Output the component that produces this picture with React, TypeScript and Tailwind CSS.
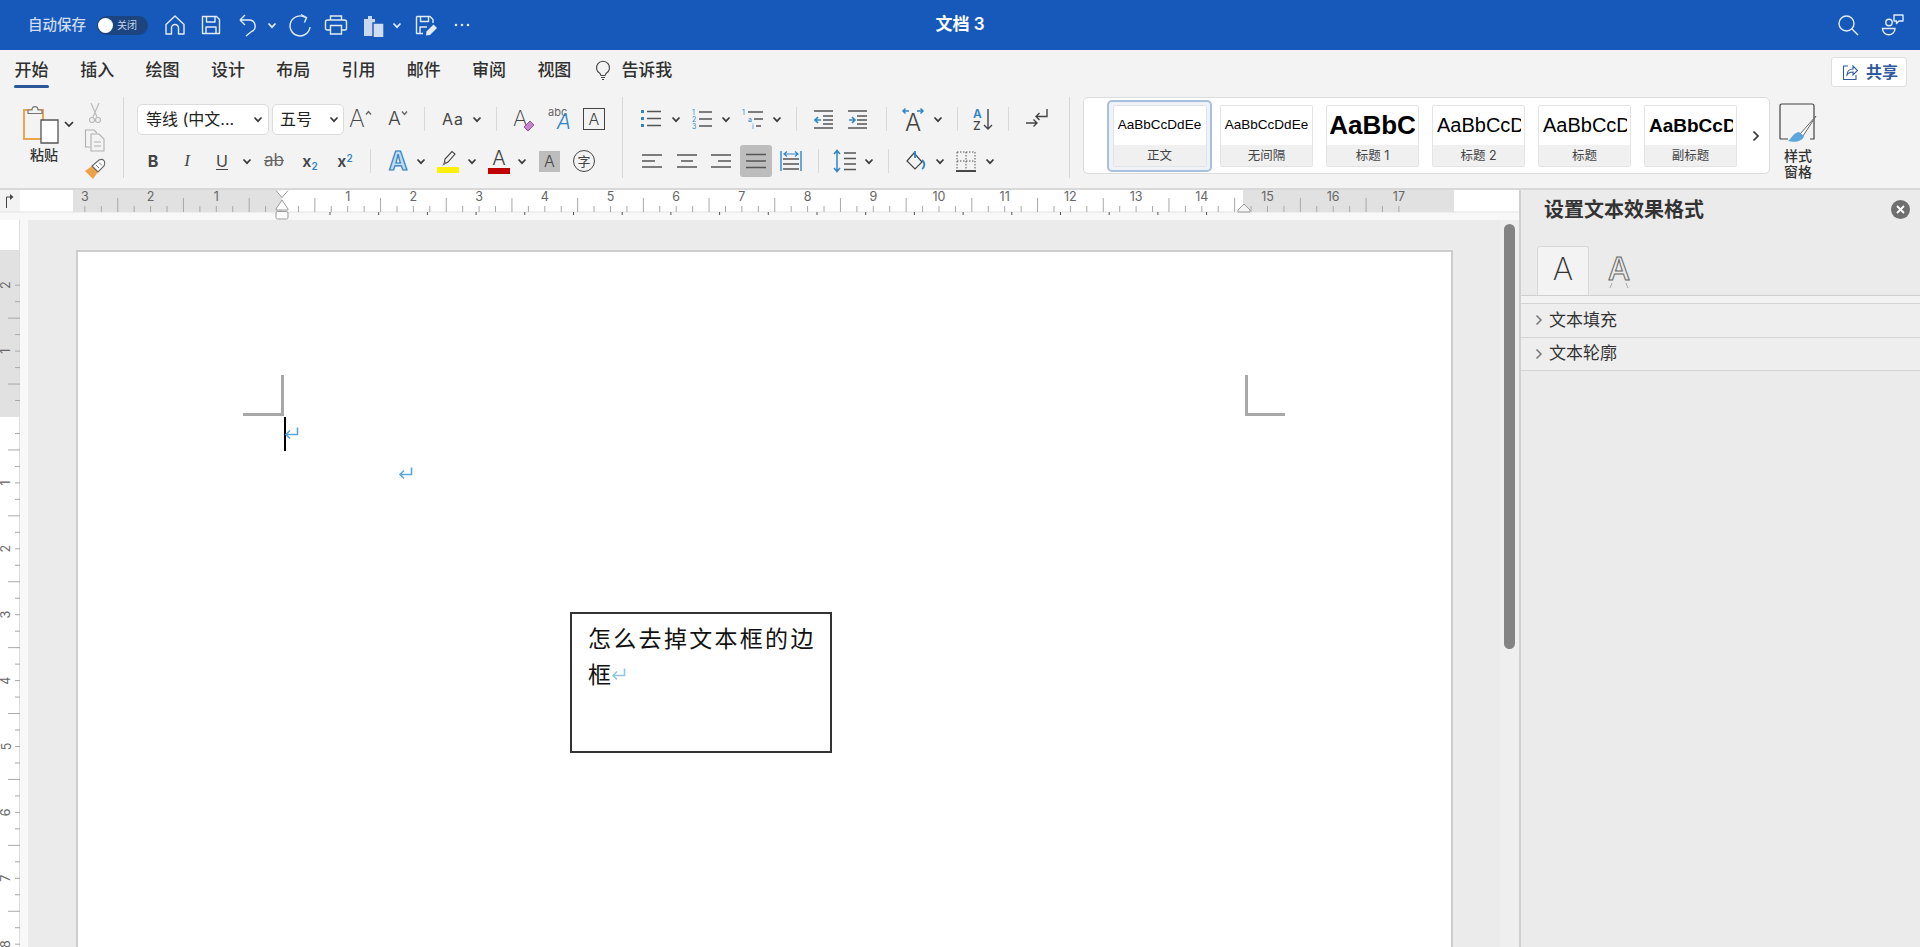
import type { ReactNode } from "react";
import clsx from "clsx";

const tabs = ["开始", "插入", "绘图", "设计", "布局", "引用", "邮件", "审阅", "视图"];
const UNIT = 65.7;
const ZERO = 282;
const V_UNIT = 65.9;
const V_ZERO = 417 - 220;

function Ic({
  w,
  h = w,
  className,
  children,
}: {
  w: number;
  h?: number;
  className?: string;
  children: ReactNode;
}) {
  return (
    <svg
      width={w}
      height={h}
      viewBox={`0 0 ${w} ${h}`}
      fill="none"
      stroke="currentColor"
      strokeWidth="1.4"
      className={clsx("shrink-0", className)}
    >
      {children}
    </svg>
  );
}

function Chev({ className }: { className?: string }) {
  return (
    <Ic w={10} h={7} className={clsx("text-[#3a3a3a]", className)}>
      <path d="M1.5 1.5 L5 5.2 L8.5 1.5" strokeWidth="1.7" />
    </Ic>
  );
}

function Sep({ className }: { className?: string }) {
  return <div className={clsx("w-px h-[24px] bg-[#d8d8d8] shrink-0", className)} />;
}

function GroupSep() {
  return <div className="w-px h-[81px] mt-[2px] bg-[#d8d8d8] shrink-0" />;
}

function Lines({ className }: { className?: string }) {
  return (
    <Ic w={20} h={20} className={clsx("text-[#555]", className)}>
      <path d="M0 3.5 H20 M0 10 H20 M0 16.5 H20" />
    </Ic>
  );
}

function TitleBar() {
  return (
    <div className="h-[50px] bg-[#1659bb] grid grid-cols-[1fr_auto_1fr] items-center text-[#e3ebf7] shrink-0">
      <div className="flex items-center pl-[28px]">
        <span className="text-[14.5px] text-[#cfdcf1] font-medium">自动保存</span>
        <div className="ml-[11px] w-[51px] h-[19px] rounded-full bg-[#1c447f] flex items-center">
          <div className="w-[15px] h-[15px] rounded-full bg-white ml-[1px]" />
          <span className="ml-[4px] text-[10px] leading-none text-[#c6d4ea]">关闭</span>
        </div>
        <Ic w={22} h={24} className="ml-[16px]">
          <path d="M2 11.5 L11 3 L20 11.5 V21 H14.5 V15 A3.5 3.5 0 0 0 7.5 15 V21 H2 Z" strokeLinejoin="round" />
        </Ic>
        <Ic w={22} h={24} className="ml-[14px]">
          <path d="M2.5 3.5 H16.5 L19.5 6.5 V20.5 H2.5 Z M6.5 3.5 V9 H15 V3.5 M6 20.5 V14 H16 V20.5" strokeLinejoin="round" />
        </Ic>
        <Ic w={24} className="ml-[14px]">
          <path d="M4 7 L9 2 M4 7 L9 12 M4 7 H13 A6 6 0 0 1 15.5 18.5 L10 23" />
        </Ic>
        <Chev className="ml-[7px] text-[#e3ebf7]" />
        <Ic w={24} className="ml-[11px]">
          <path d="M17.5 4.5 A10 10 0 1 0 22 14" />
          <path d="M13 1.5 L18.5 4.5 L16.5 9.5" />
        </Ic>
        <Ic w={24} className="ml-[12px]">
          <path d="M6.5 7 V3 H17.5 V7 M6.5 17 H3 A1.5 1.5 0 0 1 1.5 15.5 V9 A2 2 0 0 1 3.5 7 H20.5 A2 2 0 0 1 22.5 9 V15.5 A1.5 1.5 0 0 1 21 17 H17.5 M6.5 12.5 H17.5 V21 H6.5 Z" />
        </Ic>
        <Ic w={24} className="ml-[14px]">
          <path d="M2 6 H6 V3 H10 V6 H13 V23 H2 Z" fill="#c9d8ee" stroke="none" />
          <path d="M11 10 H22 V25 H11 Z" fill="#cfdcf1" stroke="#1659bb" />
        </Ic>
        <Chev className="ml-[6px] text-[#e3ebf7]" />
        <Ic w={24} className="ml-[12px]">
          <path d="M2.5 3.5 H16 L19 6.5 V10 M2.5 3.5 V20.5 H9 M6.5 3.5 V8.5 H14.5 V3.5 M6 20 V14 H13" strokeLinejoin="round" />
          <path d="M12 22.5 L12.5 18.5 L19.5 11.5 L23 15 L16 22 Z" fill="#e3ebf7" stroke="none" />
        </Ic>
        <Ic w={18} h={6} className="ml-[15px]">
          <path d="M3 3 H3.01 M9 3 H9.01 M15 3 H15.01" strokeWidth="2.6" strokeLinecap="round" />
        </Ic>
      </div>
      <div className="text-[17px] font-semibold text-white">文档 3</div>
      <div className="flex items-center justify-end pr-[15px]">
        <Ic w={22}>
          <circle cx="9.5" cy="9.5" r="7.5" />
          <path d="M15 15 L21 21" />
        </Ic>
        <Ic w={24} className="ml-[22px]">
          <circle cx="8" cy="9.5" r="3.2" />
          <path d="M1.5 15.5 H14 A6.2 6.2 0 0 1 1.5 15.5 Z" />
          <path d="M13 2 H22 V8 H18 L15.5 10.5 V8 H13 Z" strokeLinejoin="round" />
        </Ic>
      </div>
    </div>
  );
}

function TabRow() {
  return (
    <div className="h-[45px] flex items-start pl-[14px] shrink-0">
      <div className="flex gap-[31.3px] pt-[8px]">
        {tabs.map((t, i) => (
          <div key={t} className="flex flex-col items-center">
            <span className="text-[17px] leading-[24px] font-medium text-[#303030]">{t}</span>
            {i === 0 && <div className="w-[35px] h-[3px] mt-[3px] rounded-full bg-[#2b579a]" />}
          </div>
        ))}
      </div>
      <Ic w={16} h={22} className="ml-[24px] mt-[9px] text-[#444]">
        <path d="M5 14.5 A6.5 6.5 0 1 1 11 14.5 L10 16.5 H6 Z M6 18.5 H10 M7 20.5 H9" strokeWidth="1.1" />
      </Ic>
      <span className="ml-[10px] pt-[8px] text-[17px] leading-[24px] font-medium text-[#303030]">告诉我</span>
      <div className="ml-auto mr-[13px] mt-[7px] w-[76px] h-[30px] bg-white border border-[#dedede] rounded-[3px] flex items-center pl-[10px]">
        <Ic w={16} h={18} className="text-[#2f5a9e]">
          <path d="M6 3 H1.5 V16.5 H14 V12 M5 12 C5 8 8 6 11 6 V3 L15.5 7.5 L11 12 V9 C9 9 6.5 9.5 5 12 Z" strokeWidth="1.1" />
        </Ic>
        <span className="ml-[8px] text-[16px] font-semibold text-[#2f5a9e]">共享</span>
      </div>
    </div>
  );
}

function PasteGroup() {
  return (
    <div className="w-[123px] flex pl-[21px] pt-[7px] shrink-0">
      <div className="w-[54px] flex flex-col">
        <Ic w={54} h={42}>
          <path d="M3 8 H22 V37 H3 Z" stroke="#e9a64c" strokeWidth="2" />
          <path d="M7 8 H11 C11 3.5 17 3.5 17 8 H21 V11.5 H7 Z" fill="#f3f3f3" stroke="#777" strokeWidth="1.2" />
          <path d="M20 18 H37 V41 H20 Z" fill="white" stroke="#555" strokeWidth="1.3" />
          <path d="M44 20 L48 24 L52 20" stroke="#333" strokeWidth="1.7" />
        </Ic>
        <span className="w-[46px] text-center text-[14px] leading-[20px] mt-[1px] text-[#333] font-medium">粘贴</span>
      </div>
      <div className="ml-[9px] w-[21px] flex flex-col items-center">
        <Ic w={14} h={22} className="text-[#b7b7b7] mt-[1px]">
          <path d="M3 0 L9 14 M11 0 L5 14" strokeWidth="1.1" />
          <circle cx="4" cy="17" r="2.5" strokeWidth="1.1" />
          <circle cx="10" cy="17" r="2.5" strokeWidth="1.1" />
        </Ic>
        <Ic w={22} h={24} className="mt-[3px] text-[#b0b0b0]">
          <path d="M6 19 H1.5 V2 H10 L13 5" strokeWidth="1.1" />
          <path d="M7 6 H15 L20 11 V23 H7 Z M10 14 H17 M10 18 H17" strokeWidth="1.1" />
        </Ic>
        <Ic w={22} className="mt-[6px]">
          <path d="M1 13 L9 21 L14 14 L8 8 Z" fill="#eda24a" stroke="none" />
          <path d="M8 8 L14 14 L20 8 C22 3 19 0 15 2 Z" fill="white" stroke="#666" strokeWidth="1.1" />
          <path d="M12 7 L15 10 M15 4.5 L18 7.5" stroke="#666" strokeWidth="0.9" />
        </Ic>
      </div>
    </div>
  );
}

function FontGroup() {
  return (
    <div className="w-[498px] pt-[8px] shrink-0 text-[#444]">
      <div className="h-[32px] flex items-center">
        <div className="ml-[13px] w-[132px] h-[31px] bg-white border border-[#dcdcdc] rounded-[5px] flex items-center pl-[8px] shrink-0">
          <span className="text-[16px] text-[#222]">等线 (中文...</span>
          <Chev className="ml-auto mr-[5px]" />
        </div>
        <div className="ml-[3px] w-[72px] h-[31px] bg-white border border-[#dcdcdc] rounded-[5px] flex items-center pl-[7px] shrink-0">
          <span className="text-[16px] text-[#222]">五号</span>
          <Chev className="ml-auto mr-[4px]" />
        </div>
        <div className="ml-[5px] w-[24px] flex items-start">
          <span className="text-[24px] leading-[28px] font-extralight">A</span>
          <Ic w={7} h={6} className="mt-[5px] text-[#666]">
            <path d="M1 4.5 L3.5 1.5 L6 4.5" />
          </Ic>
        </div>
        <div className="ml-[15px] w-[20px] flex items-start">
          <span className="text-[19px] leading-[26px] font-light">A</span>
          <Ic w={7} h={6} className="mt-[4px] text-[#666]">
            <path d="M1 1.5 L3.5 4.5 L6 1.5" />
          </Ic>
        </div>
        <Sep className="ml-[16px]" />
        <span className="ml-[17px] w-[22px] text-[16px] leading-none tracking-[1px] whitespace-nowrap">Aa</span>
        <Chev className="ml-[8px]" />
        <Sep className="ml-[14px]" />
        <div className="ml-[16px] w-[21px] flex items-start relative h-[26px]">
          <span className="text-[22px] leading-[24px] font-extralight">A</span>
          <Ic w={12} h={12} className="absolute right-[-1px] bottom-[0px]">
            <path d="M1 7 L7 1 L11 5 L5 11 Z" fill="#c583c8" stroke="#9a4ea0" strokeWidth="1" />
          </Ic>
        </div>
        <div className="ml-[14px] w-[23px] h-[28px] relative">
          <span className="absolute left-0 top-[1px] text-[11px] leading-[12px] text-[#666]">abc</span>
          <span className="absolute right-0 bottom-0 text-[21px] leading-[22px] italic font-light text-[#2e86c9]">A</span>
        </div>
        <div className="ml-[12px] w-[22px] h-[22px] border border-[#444] flex items-center justify-center text-[16px] leading-none font-light">A</div>
      </div>
      <div className="h-[32px] mt-[10px] flex items-center">
        <span className="ml-[21px] w-[16px] text-center text-[16px] font-bold">B</span>
        <span className="ml-[18px] w-[16px] text-center text-[17px] italic [font-family:'Liberation_Serif',serif]">I</span>
        <span className="ml-[19px] w-[16px] text-center text-[16px] underline underline-offset-2">U</span>
        <Chev className="ml-[12px]" />
        <span className="ml-[11px] w-[22px] text-center text-[17px] line-through text-[#666]">ab</span>
        <span className="ml-[15px] w-[20px] text-center text-[16px] font-semibold">
          x<sub className="text-[10px] text-[#2e86c9]">2</sub>
        </span>
        <span className="ml-[15px] w-[20px] text-center text-[16px] font-semibold">
          x<sup className="text-[10px] text-[#2e86c9]">2</sup>
        </span>
        <Sep className="ml-[15px]" />
        <span className="ml-[16px] w-[22px] text-center text-[25px] leading-none font-bold text-[#bedcf2] [-webkit-text-stroke:1.2px_#2e7fc0]">A</span>
        <Chev className="ml-[7px]" />
        <div className="ml-[11px] w-[22px] flex flex-col items-center">
          <Ic w={20} h={17}>
            <path d="M6 14 L7 9 L14 1.5 L17 4 L10 12 Z" strokeWidth="1.1" />
            <path d="M4 16 L7 11 L9 13 Z" fill="#777" stroke="none" />
          </Ic>
          <div className="w-[22px] h-[6px] bg-[#ffef00]" />
        </div>
        <Chev className="ml-[8px]" />
        <div className="ml-[11px] w-[22px] flex flex-col items-center">
          <span className="text-[20px] leading-[18px] font-light">A</span>
          <div className="w-[22px] h-[6px] bg-[#c00000] mt-[1px]" />
        </div>
        <Chev className="ml-[7px]" />
        <div className="ml-[12px] w-[21px] h-[21px] bg-[#bdbdbd] flex items-center justify-center text-[16px] leading-none font-light">A</div>
        <div className="ml-[13px] w-[22px] h-[22px] rounded-full border border-[#444] flex items-center justify-center text-[13px] leading-none">字</div>
      </div>
    </div>
  );
}

function ParagraphGroup() {
  return (
    <div className="w-[446px] pt-[8px] shrink-0">
      <div className="h-[32px] flex items-center">
        <Ic w={22} className="ml-[17px] text-[#555]">
          <path d="M1 2 H4 V5 H1 Z M1 9 H4 V12 H1 Z M1 16 H4 V19 H1 Z" fill="#2e86c9" stroke="none" />
          <path d="M7 3.5 H21 M7 10.5 H21 M7 17.5 H21" />
        </Ic>
        <Chev className="ml-[9px]" />
        <Ic w={22} className="ml-[10px] text-[#555] overflow-visible">
          <text x="1" y="7" fontSize="7" fill="#2e86c9" stroke="none">1</text>
          <text x="1" y="14" fontSize="7" fill="#2e86c9" stroke="none">2</text>
          <text x="1" y="21" fontSize="7" fill="#2e86c9" stroke="none">3</text>
          <path d="M8 4 H21 M8 11 H21 M8 18 H21" />
        </Ic>
        <Chev className="ml-[8px]" />
        <Ic w={22} className="ml-[11px] text-[#555] overflow-visible">
          <text x="0" y="7" fontSize="7" fill="#2e86c9" stroke="none">1</text>
          <text x="6" y="14" fontSize="7" fill="#2e86c9" stroke="none">a</text>
          <text x="10" y="21" fontSize="7" fill="#2e86c9" stroke="none">i</text>
          <path d="M6 4 H21 M12 11 H21 M14 18 H19" />
        </Ic>
        <Chev className="ml-[8px]" />
        <Sep className="ml-[14px]" />
        <Ic w={20} className="ml-[17px] text-[#555]">
          <path d="M0 2 H19 M9 7 H19 M9 11 H19 M9 15 H19 M0 19 H19" />
          <path d="M1 11 H7 M4 8 L1 11 L4 14" stroke="#2e86c9" strokeWidth="1.6" />
        </Ic>
        <Ic w={20} className="ml-[14px] text-[#555]">
          <path d="M0 2 H19 M9 7 H19 M9 11 H19 M9 15 H19 M0 19 H19" />
          <path d="M1 11 H7 M4 8 L7 11 L4 14" stroke="#2e86c9" strokeWidth="1.6" />
        </Ic>
        <Sep className="ml-[18px]" />
        <Ic w={24} className="ml-[14px] text-[#444] overflow-visible">
          <text x="12" y="24" fontSize="24" fontWeight="300" textAnchor="middle" fill="#444" stroke="none">A</text>
          <path d="M2 4 H8 M4.5 1.5 L2 4 L4.5 6.5 M16 4 H22 M19.5 1.5 L22 4 L19.5 6.5" stroke="#2e86c9" strokeWidth="1.5" />
        </Ic>
        <Chev className="ml-[8px]" />
        <Sep className="ml-[14px]" />
        <Ic w={22} h={24} className="ml-[14px] text-[#444] overflow-visible">
          <text x="1" y="11" fontSize="12" fontWeight="600" fill="#2e86c9" stroke="none">A</text>
          <text x="1" y="23" fontSize="12" fontWeight="500" fill="#444" stroke="none">Z</text>
          <path d="M16 2 V22 M12 18 L16 22 L20 18" />
        </Ic>
        <Sep className="ml-[14px]" />
        <Ic w={24} className="ml-[16px] text-[#444]">
          <path d="M22 2 V9.5 H11 M14.5 6 L11 9.5 L14.5 13" />
          <path d="M1 16 H12 M8.5 12.5 L12 16 L8.5 19.5" />
        </Ic>
      </div>
      <div className="h-[32px] mt-[10px] flex items-center">
        <Ic w={20} className="ml-[19px] text-[#555]">
          <path d="M0 4 H20 M0 10 H13 M0 16 H20" />
        </Ic>
        <Ic w={20} className="ml-[15px] text-[#555]">
          <path d="M0 4 H20 M4 10 H16 M0 16 H20" />
        </Ic>
        <Ic w={20} className="ml-[14px] text-[#555]">
          <path d="M0 4 H20 M7 10 H20 M0 16 H20" />
        </Ic>
        <div className="ml-[9px] w-[32px] h-[32px] rounded-[3px] bg-[#bdbdbd] flex items-center justify-center shrink-0">
          <Lines className="text-[#444]" />
        </div>
        <Ic w={22} className="ml-[8px] text-[#555]">
          <path d="M1 1 V21 M21 1 V21" stroke="#2e86c9" />
          <path d="M4 4 H18 M7 1.5 L4 4 L7 6.5 M15 1.5 L18 4 L15 6.5" stroke="#2e86c9" strokeWidth="1.2" />
          <path d="M3 9 H19 M3 14 H19 M3 19 H19" />
        </Ic>
        <Sep className="ml-[16px]" />
        <Ic w={24} className="ml-[14px] text-[#555]">
          <path d="M4 2 V22 M1 5 L4 1.5 L7 5 M1 19 L4 22.5 L7 19" stroke="#2e86c9" strokeWidth="1.5" />
          <path d="M11 4 H23 M11 9.5 H23 M11 15 H23 M11 20.5 H23" />
        </Ic>
        <Chev className="ml-[7px]" />
        <Sep className="ml-[14px]" />
        <Ic w={22} className="ml-[17px] text-[#444]">
          <path d="M1 11 L8 3 L16 12 L9 19 Z" strokeWidth="1.2" />
          <path d="M9 1 L9 8 M16 10 C20 13 18 18 16 19" stroke="#2e86c9" strokeWidth="1.8" />
        </Ic>
        <Chev className="ml-[7px]" />
        <Ic w={22} className="ml-[10px] text-[#555]">
          <path d="M2 2 H20 V20 M2 2 V20 M11 2 V20 M2 11 H20" strokeDasharray="1.5 1.5" strokeWidth="1" />
          <path d="M1 21 H21" strokeWidth="1.8" stroke="#333" />
        </Ic>
        <Chev className="ml-[8px]" />
      </div>
    </div>
  );
}

function StyleCard({
  label,
  children,
  center,
  className,
}: {
  label: string;
  children: ReactNode;
  center?: boolean;
  className?: string;
}) {
  return (
    <div
      className={clsx(
        "w-[93px] h-[62px] border border-[#e4e4e4] rounded-[2px] bg-white flex flex-col overflow-hidden shrink-0",
        className,
      )}
    >
      <div className="h-[40px] px-[3px] flex items-center">
        <div
          className={clsx(
            "w-full flex whitespace-nowrap overflow-hidden leading-none text-black [font-family:'Liberation_Sans',sans-serif]",
            center ? "justify-center" : "pl-[1px]",
          )}
        >
          {children}
        </div>
      </div>
      <div className="flex-1 bg-[#f0f0f0] text-center text-[12.5px] leading-[21px] text-[#444]">{label}</div>
    </div>
  );
}

function StyleGallery() {
  return (
    <div className="ml-[13px] mt-[2px] w-[687px] h-[77px] bg-white border border-[#dcdcdc] rounded-[5px] flex items-center pl-[23px] shrink-0">
      <div className="w-[105px] h-[72px] border-2 border-[#a9bfdc] rounded-[5px] bg-[#eef3fa] flex items-center justify-center shrink-0">
        <StyleCard label="正文" center className="!w-[94px]">
          <span className="text-[13.5px]">AaBbCcDdEe</span>
        </StyleCard>
      </div>
      <StyleCard label="无间隔" center className="ml-[8px]">
        <span className="text-[13.5px]">AaBbCcDdEe</span>
      </StyleCard>
      <StyleCard label="标题 1" center className="ml-[13px]">
        <span className="text-[26px] font-bold">AaBbC</span>
      </StyleCard>
      <StyleCard label="标题 2" className="ml-[13px]">
        <span className="text-[20px]">AaBbCcD</span>
      </StyleCard>
      <StyleCard label="标题" className="ml-[13px]">
        <span className="text-[20px]">AaBbCcD</span>
      </StyleCard>
      <StyleCard label="副标题" className="ml-[13px]">
        <span className="text-[19px] font-bold">AaBbCcD</span>
      </StyleCard>
      <Ic w={8} h={12} className="ml-[15px] text-[#333]">
        <path d="M1.5 1.5 L6 6 L1.5 10.5" strokeWidth="1.7" />
      </Ic>
    </div>
  );
}

function StylePane() {
  return (
    <div className="ml-[8px] w-[40px] pt-[8px] flex flex-col items-center shrink-0">
      <Ic w={40} h={40}>
        <path d="M2 36 V3 Q2 1 4 1 H34 Q36 1 36 3 V36 H32 M2 36 H10" stroke="#444" strokeWidth="1.2" />
        <path d="M38 13 L22 31 L25 33 Z" fill="white" stroke="#666" strokeWidth="1" />
        <path d="M21 29 C15 30 14 35 10 38 C17 40 25 38 26 33 Z" fill="#5ba6dc" stroke="none" />
      </Ic>
      <span className="mt-[5px] w-[34px] text-center text-[14px] leading-[16px] text-[#333] font-medium">样式窗格</span>
    </div>
  );
}

function Ribbon() {
  return (
    <div className="h-[140px] bg-[#f3f3f3] border-b-2 border-[#d8d8d8] shrink-0">
      <TabRow />
      <div className="h-[93px] flex items-start">
        <PasteGroup />
        <GroupSep />
        <FontGroup />
        <GroupSep />
        <ParagraphGroup />
        <GroupSep />
        <StyleGallery />
        <StylePane />
      </div>
    </div>
  );
}

function HRuler() {
  const quarters = Array.from({ length: 20 * 4 + 1 }, (_, i) => i - 12).filter((k) => {
    const x = ZERO + (k * UNIT) / 4;
    return x > 76 && x < 1452 && k !== 0;
  });
  const stops = Array.from({ length: 19 }, (_, i) => 330 + i * 48.7);
  const nums = [-3, -2, -1, 1, 2, 3, 4, 5, 6, 7, 8, 9, 10, 11, 12, 13, 14, 15, 16, 17];
  return (
    <svg width={1519} height={30} className="block shrink-0">
      <rect x="0" y="0" width="1519" height="30" fill="#f8f8f8" />
      <rect x="0" y="0" width="20" height="22" fill="#f3f3f3" />
      <rect x="20" y="0" width="1499" height="22" fill="#ffffff" />
      <rect x="73" y="0" width="209" height="22" fill="#e1e1e1" />
      <rect x="1243" y="0" width="211" height="22" fill="#e1e1e1" />
      <path d="M0 22 H1519" stroke="#e2e2e2" />
      <path d="M6.5 18 V7 H10" stroke="#444" strokeWidth="1" fill="none" />
      <path d="M10 4 L13.5 7 L10 10 Z" fill="#444" />
      {quarters.map((k) => {
        const x = ZERO + (k * UNIT) / 4;
        const long = ((k % 4) + 4) % 4 === 2;
        return <path key={k} d={`M${x} ${long ? 8 : 16} V22`} stroke="#a8a8a8" />;
      })}
      {stops.map((x) => (
        <path key={x} d={`M${x} 22 V25`} stroke="#555" />
      ))}
      {nums.map((n) => (
        <text key={n} x={ZERO + n * UNIT} y={11} fontSize="12.5" fill="#666" textAnchor="middle">
          {Math.abs(n)}
        </text>
      ))}
      <path d="M276 0.5 L282 7.5 L288 0.5" stroke="#999" fill="#ffffff" />
      <path d="M282 10 L288 19 V20 H276 V19 Z" stroke="#999" fill="#ffffff" />
      <rect x="276" y="21.5" width="12" height="7.5" rx="1.5" stroke="#999" fill="#ffffff" />
      <path d="M1244 14 L1250 20 V22 H1238 V20 Z" stroke="#999" fill="#f4f4f4" />
    </svg>
  );
}

function VRuler() {
  const quarters = Array.from({ length: 48 }, (_, i) => i - 8).filter((k) => {
    const y = V_ZERO + (k * V_UNIT) / 4;
    return y > 35 && k !== 0;
  });
  const nums = [-2, -1, 1, 2, 3, 4, 5, 6, 7, 8];
  return (
    <svg width={20} height={727} className="block shrink-0">
      <rect x="0" y="0" width="20" height="727" fill="#ffffff" />
      <rect x="0" y="30" width="20" height="167" fill="#e1e1e1" />
      <path d="M19.5 0 V727" stroke="#dcdcdc" />
      {quarters.map((k) => {
        const y = V_ZERO + (k * V_UNIT) / 4;
        const long = ((k % 4) + 4) % 4 === 2;
        return <path key={k} d={`M${long ? 8 : 15} ${y} H20`} stroke="#a8a8a8" />;
      })}
      {nums.map((n) => {
        const y = V_ZERO + n * V_UNIT;
        return (
          <text
            key={n}
            x={6}
            y={y}
            fontSize="12.5"
            fill="#666"
            textAnchor="middle"
            dominantBaseline="central"
            transform={`rotate(-90 6 ${y})`}
          >
            {Math.abs(n)}
          </text>
        );
      })}
    </svg>
  );
}

function ReturnMark({ className }: { className?: string }) {
  return (
    <Ic w={15} h={13} className={clsx("text-[#5ba7dd]", className)}>
      <path d="M13.5 0.5 V7.5 H2 M6 3.5 L2 7.5 L6 11.5" strokeWidth="1.6" />
    </Ic>
  );
}

function Page() {
  return (
    <div className="relative mt-[30px] w-[1377px] h-[800px] bg-white border-t-2 border-l-2 border-r-2 border-[#cdcdcd] shrink-0">
      <div className="absolute left-[203px] top-[123px] w-[3px] h-[41px] bg-[#a8a8a8]" />
      <div className="absolute left-[165px] top-[161px] w-[41px] h-[3px] bg-[#a8a8a8]" />
      <div className="absolute left-[1167px] top-[123px] w-[3px] h-[41px] bg-[#a8a8a8]" />
      <div className="absolute left-[1167px] top-[161px] w-[40px] h-[3px] bg-[#a8a8a8]" />
      <div className="absolute left-[206px] top-[165px] w-[1.5px] h-[34px] bg-black" />
      <ReturnMark className="absolute left-[206px] top-[175px]" />
      <ReturnMark className="absolute left-[320px] top-[215px]" />
      <div className="absolute left-[492px] top-[360px] w-[262px] h-[141px] border-2 border-[#333] pl-[16px] pt-[7px] text-[23px] leading-[36px] tracking-[2.3px] text-[#111]">
        怎么去掉文本框的边
        <br />
        框<ReturnMark className="inline-block -mt-[4px] ml-[-2px] text-[#8ec5e8]" />
      </div>
    </div>
  );
}

function Workspace() {
  return (
    <div className="flex h-[727px] overflow-hidden">
      <VRuler />
      <div className="w-[8px] bg-[#f8f8f8] shrink-0" />
      <div className="flex-1 bg-[#ebebeb] flex items-start overflow-hidden shadow-[inset_-1px_0_0_#e2e2e2]">
        <div className="ml-[48px] shrink-0 flex items-start">
          <Page />
        </div>
        <div className="ml-[47px] w-[19px] h-full bg-[#efefef] pl-[4px] pt-[4px] shrink-0">
          <div className="w-[11px] h-[425px] rounded-full bg-[#848484]" />
        </div>
      </div>
    </div>
  );
}

function SidePanel() {
  return (
    <div className="w-[401px] h-[757px] bg-[#ebebeb] border-l-2 border-[#d0d0d0] shrink-0">
      <div className="h-[57px] flex items-start pl-[23px] pt-[6px]">
        <span className="text-[20px] leading-[28px] font-semibold text-[#333]">设置文本效果格式</span>
        <div className="ml-auto mr-[10px] mt-[4px] w-[19px] h-[19px] rounded-full bg-[#6f6f6f] flex items-center justify-center">
          <Ic w={9} className="text-white">
            <path d="M1 1 L8 8 M8 1 L1 8" strokeWidth="1.8" />
          </Ic>
        </div>
      </div>
      <div className="h-[49px] flex items-end pl-[16px] border-b border-[#cfcfcf]">
        <div className="w-[52px] h-[49px] bg-[#f3f3f3] border-t border-l border-r border-[#d8d8d8] rounded-t-[3px] flex justify-center pt-[2px] text-[31px] leading-[40px] font-extralight text-[#333] shrink-0">
          A
        </div>
        <div className="ml-[4px] w-[52px] h-[49px] flex flex-col items-center pt-[4px] shrink-0">
          <span className="text-[31px] leading-[38px] font-medium text-transparent [-webkit-text-stroke:1px_#666]">A</span>
          <Ic w={22} h={5} className="text-[#aaa] -mt-[5px]">
            <path d="M4 0 L2 5 M18 0 L20 5" strokeWidth="1" />
          </Ic>
        </div>
      </div>
      <div className="h-[7px] bg-[#f2f2f2]" />
      {["文本填充", "文本轮廓"].map((t) => (
        <div key={t} className="h-[33.5px] bg-[#eeeeee] border-t border-[#d4d4d4] flex items-center pl-[14px]">
          <Ic w={8} h={12} className="text-[#777]">
            <path d="M1.5 1.5 L6 6 L1.5 10.5" strokeWidth="1.5" />
          </Ic>
          <span className="ml-[6px] text-[17px] leading-none text-[#333]">{t}</span>
        </div>
      ))}
      <div className="h-px bg-[#d4d4d4]" />
    </div>
  );
}

export default function App() {
  return (
    <div className="w-[1920px] h-[947px] overflow-hidden flex flex-col bg-[#ebebeb] [font-family:Inter,'Noto_Sans_CJK_SC',sans-serif]">
      <TitleBar />
      <Ribbon />
      <div className="flex flex-1 min-h-0">
        <div className="w-[1519px] shrink-0 flex flex-col">
          <HRuler />
          <Workspace />
        </div>
        <SidePanel />
      </div>
    </div>
  );
}
